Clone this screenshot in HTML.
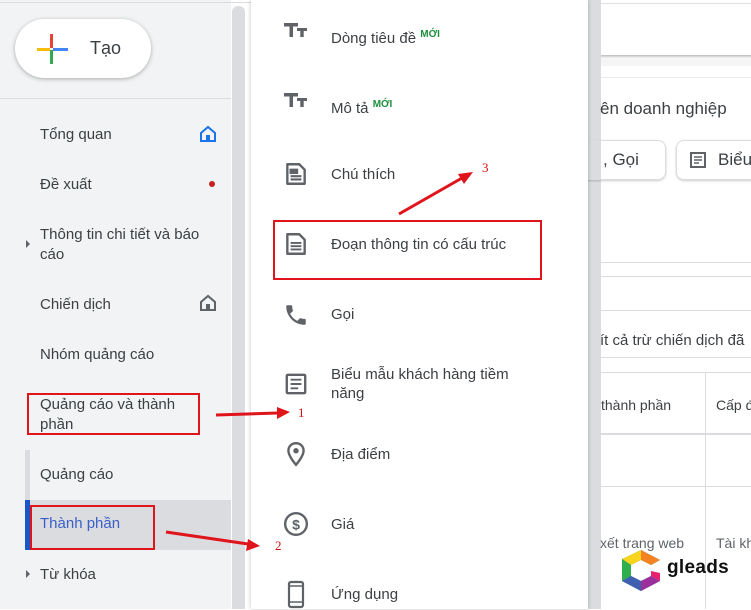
<!DOCTYPE html><html><head><meta charset="utf-8"><style>
*{margin:0;padding:0;box-sizing:border-box}
body{width:751px;height:609px;overflow:hidden;position:relative;background:#fff;font-family:"Liberation Sans",Arial,sans-serif;color:#3c4043}
.a{position:absolute}
.side{left:0;top:0;width:231px;height:609px;background:#f1f3f4}
.nav{position:absolute;left:40px;font-size:15px;color:#3c4043;line-height:20px}
.menu{left:251px;top:0;width:337px;height:609px;background:#fff;box-shadow:0 0 4px rgba(0,0,0,.25)}
.mi{position:absolute;left:80px;font-size:15px;color:#3c4043;line-height:19px}
.ic{position:absolute;left:32px}
.new{font-size:10px;font-weight:bold;color:#1e8e3e;vertical-align:6px}
.red{position:absolute;border:2px solid #e0141b}
.num{position:absolute;font-family:"Liberation Serif",serif;font-size:13px;color:#d01010}
</style></head><body>
<div class="a side"></div>
<div class="a" style="left:0;top:98px;width:231px;height:1px;background:#dadce0"></div>
<div class="a" style="left:0;top:2px;width:251px;height:1px;background:#dadce0"></div>
<div class="a" style="left:15px;top:19px;width:136px;height:59px;border-radius:30px;background:#fff;box-shadow:0 1px 4px rgba(0,0,0,.3)"></div>
<div class="a" style="left:50px;top:34px;width:3px;height:14px;background:#ea4335"></div>
<div class="a" style="left:50px;top:50px;width:3px;height:14px;background:#34a853"></div>
<div class="a" style="left:37px;top:48px;width:13px;height:3px;background:#fbbc04"></div>
<div class="a" style="left:53px;top:48px;width:15px;height:3px;background:#4285f4"></div>
<div class="a" style="left:90px;top:38px;font-size:18px;color:#3c4043">Tạo</div>
<div class="a" style="left:232px;top:6px;width:13px;height:603px;background:#dadce0;border-radius:6px 6px 0 0"></div>
<div class="nav" style="top:125px">Tổng quan</div>
<svg class="a" style="left:199px;top:125px" width="18" height="18" viewBox="0 0 18 18"><path d="M2 8L9 2l7 6v8H2z" fill="none" stroke="#1a73e8" stroke-width="2"/><rect x="7" y="10" width="4" height="6" fill="#1a73e8"/></svg>
<div class="nav" style="top:175px">Đề xuất</div>
<div class="a" style="left:209px;top:181px;width:6px;height:6px;border-radius:50%;background:#c5221f"></div>
<div class="a" style="left:26px;top:240px;border-left:4px solid #5f6368;border-top:4px solid transparent;border-bottom:4px solid transparent"></div>
<div class="nav" style="top:225px">Thông tin chi tiết và báo<br>cáo</div>
<div class="nav" style="top:295px">Chiến dịch</div>
<svg class="a" style="left:199px;top:294px" width="18" height="18" viewBox="0 0 18 18"><path d="M2 8L9 2l7 6v8H2z" fill="none" stroke="#5f6368" stroke-width="2"/><rect x="7" y="10" width="4" height="6" fill="#5f6368"/></svg>
<div class="nav" style="top:345px">Nhóm quảng cáo</div>
<div class="nav" style="top:395px">Quảng cáo và thành<br>phần</div>
<div class="a" style="left:25px;top:450px;width:5px;height:50px;background:#dadce0"></div>
<div class="nav" style="top:465px">Quảng cáo</div>
<div class="a" style="left:25px;top:500px;width:206px;height:50px;background:#dadce0"></div>
<div class="a" style="left:25px;top:500px;width:5px;height:50px;background:#1a56c6"></div>
<div class="nav" style="top:514px;color:#3b5fc8">Thành phần</div>
<div class="a" style="left:26px;top:570px;border-left:4px solid #5f6368;border-top:4px solid transparent;border-bottom:4px solid transparent"></div>
<div class="nav" style="top:565px">Từ khóa</div>

<div class="a" style="left:588px;top:0;width:13px;height:609px;background:#dadce0"></div>
<div class="a" style="left:601px;top:0;width:150px;height:609px;background:#fff"></div>
<div class="a" style="left:601px;top:3px;width:150px;height:1px;background:#e0e0e0"></div>
<div class="a" style="left:601px;top:55px;width:150px;height:11px;background:linear-gradient(#bbb,#f5f5f5 3px,#f5f5f5)"></div>
<div class="a" style="left:601px;top:66px;width:150px;height:196px;background:#fff"></div>
<div class="a" style="left:601px;top:77px;width:150px;height:1px;background:#e8eaed"></div>
<div class="a" style="left:600px;top:99px;font-size:17px;color:#3c4043">ên doanh nghiệp</div>
<div class="a" style="left:560px;top:140px;width:106px;height:40px;border:1px solid #dadce0;border-radius:8px;box-shadow:0 1px 2px rgba(0,0,0,.2)"></div>
<div class="a" style="left:603px;top:150px;font-size:17px">, Gọi</div>
<div class="a" style="left:676px;top:140px;width:90px;height:40px;border:1px solid #dadce0;border-radius:8px;box-shadow:0 1px 2px rgba(0,0,0,.2)"></div>
<svg class="a" style="left:689px;top:151px" width="18" height="18" viewBox="0 0 18 18"><rect x="2" y="2" width="14" height="14" fill="none" stroke="#5f6368" stroke-width="2"/><path d="M5 6h8M5 9h8M5 12h5" stroke="#5f6368" stroke-width="1.5"/></svg>
<div class="a" style="left:718px;top:150px;font-size:17px">Biểu</div>
<div class="a" style="left:601px;top:262px;width:150px;height:1px;background:#dadce0"></div>
<div class="a" style="left:601px;top:276px;width:150px;height:1px;background:#dadce0"></div>
<div class="a" style="left:601px;top:310px;width:150px;height:1px;background:#dadce0"></div>
<div class="a" style="left:600px;top:332px;font-size:15px;color:#3c4043;white-space:nowrap">ít cả trừ chiến dịch đã</div>
<div class="a" style="left:601px;top:357px;width:150px;height:1px;background:#dadce0"></div>
<div class="a" style="left:601px;top:372px;width:150px;height:1px;background:#dadce0"></div>
<div class="a" style="left:705px;top:372px;width:1px;height:237px;background:#dadce0"></div>
<div class="a" style="left:601px;top:397px;font-size:14px;color:#3c4043">thành phần</div>
<div class="a" style="left:716px;top:397px;font-size:14px;color:#3c4043;white-space:nowrap">Cấp đ</div>
<div class="a" style="left:601px;top:433px;width:150px;height:2px;background:#dadce0"></div>
<div class="a" style="left:601px;top:486px;width:150px;height:1px;background:#dadce0"></div>
<div class="a" style="left:600px;top:535px;font-size:14px;color:#5f6368;white-space:nowrap">xết trang web</div>
<div class="a" style="left:716px;top:535px;font-size:14px;color:#5f6368;white-space:nowrap">Tài kh</div>
<svg class="a" style="left:621px;top:548px" width="42" height="44" viewBox="0 0 42 44"><path d="M20 2L39 12 30 17 20 12 10 17v11l10 5 10-5 9 5-19 10L1 33V11z" fill="#2a9bd8"/><path d="M20 2L39 12 30 17 20 12z" fill="#f58220"/><path d="M1 11L20 2v10L10 17z" fill="#f7d51d"/><path d="M1 11l9 6v11l-9 5z" fill="#2fae4e"/><path d="M1 33l9-5 10 5v10z" fill="#3f5fb0"/><path d="M20 43v-10l10-5 9 5z" fill="#9b2f9c"/><path d="M30 28l9 5v-8l-9-2z" fill="#e7216d"/></svg>
<div class="a" style="left:667px;top:557px;font-size:19px;font-weight:bold;color:#111;letter-spacing:.3px">gleads</div>

<div class="a menu"></div>
<div class="a" style="left:251px;top:0;width:337px;height:609px">
<svg class="ic" style="left:33px;top:23px" width="24" height="14" viewBox="0 0 24 14"><path d="M0 0h14v3.5H9V14H5.5V3.5H0zM13 5h10v3h-3.3v6h-3.4V8H13z" fill="#5f6368"/></svg>
<div class="mi" style="top:25px">Dòng tiêu đề <span class="new">MỚI</span></div>
<svg class="ic" style="left:33px;top:93px" width="24" height="14" viewBox="0 0 24 14"><path d="M0 0h14v3.5H9V14H5.5V3.5H0zM13 5h10v3h-3.3v6h-3.4V8H13z" fill="#5f6368"/></svg>
<div class="mi" style="top:95px">Mô tả <span class="new">MỚI</span></div>
<svg class="ic" style="top:161px" width="26" height="26" viewBox="0 0 24 24"><path d="M4 3h11l5 5v13H4z" fill="none" stroke="#5f6368" stroke-width="2.2" stroke-linejoin="round"/><path d="M7 8h6v3H7zM7 14h10M7 17h10" stroke="#5f6368" stroke-width="2"/><path d="M7 8h6v3H7z" fill="#5f6368"/></svg>
<div class="mi" style="top:165px">Chú thích</div>
<svg class="ic" style="top:231px" width="26" height="26" viewBox="0 0 24 24"><path d="M4 3h11l5 5v13H4z" fill="none" stroke="#5f6368" stroke-width="2.2" stroke-linejoin="round"/><path d="M7 11h10M7 14h10M7 17h10" stroke="#5f6368" stroke-width="1.8"/></svg>
<div class="mi" style="top:235px">Đoạn thông tin có cấu trúc</div>
<svg class="ic" style="top:302px" width="26" height="26" viewBox="0 0 24 24"><path d="M6.6 10.8c1.4 2.8 3.8 5.1 6.6 6.6l2.2-2.2c.3-.3.7-.4 1-.2 1.1.4 2.3.6 3.6.6.6 0 1 .4 1 1V20c0 .6-.4 1-1 1C10.6 21 3 13.4 3 4c0-.6.4-1 1-1h3.5c.6 0 1 .4 1 1 0 1.3.2 2.5.6 3.6.1.3 0 .7-.2 1z" fill="#5f6368"/></svg>
<div class="mi" style="top:305px">Gọi</div>
<svg class="ic" style="top:371px" width="26" height="26" viewBox="0 0 24 24"><rect x="3.5" y="3.5" width="17" height="17" rx="1" fill="none" stroke="#5f6368" stroke-width="2.2"/><path d="M7 8h10M7 12h10M7 16h7" stroke="#5f6368" stroke-width="1.8"/></svg>
<div class="mi" style="top:365px">Biểu mẫu khách hàng tiềm<br>năng</div>
<svg class="ic" style="top:441px" width="26" height="26" viewBox="0 0 24 24"><path d="M12 2C8 2 5 5 5 9c0 5 7 13 7 13s7-8 7-13c0-4-3-7-7-7z" fill="none" stroke="#5f6368" stroke-width="2.2"/><circle cx="12" cy="9" r="2.5" fill="#5f6368"/></svg>
<div class="mi" style="top:445px">Địa điểm</div>
<svg class="ic" style="top:511px" width="26" height="26" viewBox="0 0 24 24"><circle cx="12" cy="12" r="10" fill="none" stroke="#5f6368" stroke-width="2.2"/><text x="12" y="17" text-anchor="middle" font-size="13" font-weight="bold" fill="#5f6368" font-family="Liberation Sans">$</text></svg>
<div class="mi" style="top:515px">Giá</div>
<svg class="ic" style="top:580px" width="26" height="30" viewBox="0 0 24 30"><rect x="5" y="2" width="14" height="25" rx="2" fill="none" stroke="#5f6368" stroke-width="2.2"/><path d="M5 6h14M5 22h14" stroke="#5f6368" stroke-width="1.5"/></svg>
<div class="mi" style="top:585px">Ứng dụng</div>
</div>

<div class="red" style="left:273px;top:220px;width:269px;height:60px"></div>
<div class="red" style="left:27px;top:393px;width:173px;height:42px"></div>
<div class="red" style="left:30px;top:505px;width:125px;height:45px"></div>
<svg class="a" style="left:0;top:0" width="751" height="609"><g stroke="#e0141b" stroke-width="3" fill="#e0141b"><line x1="399" y1="214" x2="462" y2="178"/><polygon points="473,172 458,174 464,184" stroke="none"/><line x1="216" y1="415" x2="278" y2="413"/><polygon points="290,412 277,407 277,419" stroke="none"/><line x1="166" y1="532" x2="248" y2="544"/><polygon points="260,546 248,539 246,551" stroke="none"/></g></svg>
<div class="num" style="left:482px;top:160px">3</div>
<div class="num" style="left:298px;top:405px">1</div>
<div class="num" style="left:275px;top:538px">2</div>
</body></html>
